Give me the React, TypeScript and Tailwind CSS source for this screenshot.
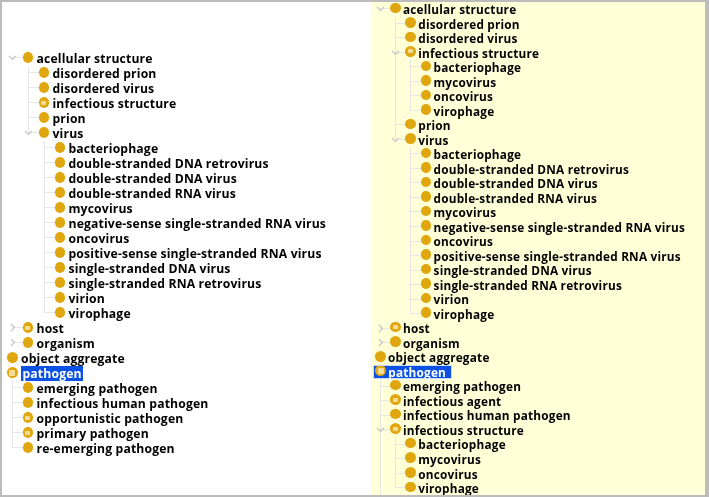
type Node = { t: string; d?: boolean; o?: boolean; c?: boolean; s?: boolean; more?: boolean; k?: Node[] };

const leaf = (t: string, d = false): Node => ({ t, d });

const virusKids = [
  "bacteriophage",
  "double-stranded DNA retrovirus",
  "double-stranded DNA virus",
  "double-stranded RNA virus",
  "mycovirus",
  "negative-sense single-stranded RNA virus",
  "oncovirus",
  "positive-sense single-stranded RNA virus",
  "single-stranded DNA virus",
  "single-stranded RNA retrovirus",
  "virion",
  "virophage",
].map((t) => leaf(t));

const phages = ["bacteriophage", "mycovirus", "oncovirus", "virophage"].map((t) => leaf(t));

const leftTree: Node[] = [
  {
    t: "acellular structure",
    o: true,
    k: [
      leaf("disordered prion"),
      leaf("disordered virus"),
      leaf("infectious structure", true),
      leaf("prion"),
      { t: "virus", o: true, k: virusKids },
    ],
  },
  { t: "host", d: true, c: true },
  { t: "organism", c: true },
];
const leftRoots: Node[] = [
  leaf("object aggregate"),
  {
    t: "pathogen",
    d: true,
    s: true,
    o: true,
    k: [
      leaf("emerging pathogen"),
      leaf("infectious human pathogen"),
      leaf("opportunistic pathogen", true),
      leaf("primary pathogen", true),
      leaf("re-emerging pathogen"),
    ],
  },
];

const rightTree: Node[] = [
  {
    t: "acellular structure",
    o: true,
    k: [
      leaf("disordered prion"),
      leaf("disordered virus"),
      { t: "infectious structure", d: true, o: true, k: phages },
      leaf("prion"),
      { t: "virus", o: true, k: virusKids },
    ],
  },
  { t: "host", d: true, c: true },
  { t: "organism", c: true },
];
const rightRoots: Node[] = [
  leaf("object aggregate"),
  {
    t: "pathogen",
    d: true,
    s: true,
    o: true,
    k: [
      leaf("emerging pathogen"),
      leaf("infectious agent", true),
      leaf("infectious human pathogen"),
      { t: "infectious structure", d: true, o: true, more: true, k: phages },
    ],
  },
];

type Guide = { level: number; half: boolean };
type Flat = { n: Node; depth: number; guides: Guide[] };

function flatten(nodes: Node[], depth: number, parents: number[], hide: boolean, out: Flat[]) {
  nodes.forEach((n, i) => {
    const last = i === nodes.length - 1;
    const guides: Guide[] = parents.map((level) => ({ level, half: false }));
    if (depth > 0 && !hide) guides.push({ level: depth - 1, half: last && !n.more });
    out.push({ n, depth, guides });
    if (n.k) {
      const next = depth > 0 && !hide && (!last || n.more) ? [...parents, depth - 1] : parents;
      flatten(n.k, depth + 1, next, false, out);
    }
  });
}

function build(tree: Node[], roots: Node[]) {
  const out: Flat[] = [];
  flatten(tree, 1, [], true, out);
  flatten(roots, 0, [], false, out);
  return out;
}

function Dot({ d, big, lift }: { d?: boolean; big?: boolean; lift: string }) {
  return (
    <span
      className={`flex shrink-0 items-center justify-center rounded-full bg-[#dfa60e] ${lift} ${
        big ? "h-[11px] w-[11px]" : "h-[10.5px] w-[10.5px]"
      }`}
    >
      {d && <span className={`rounded-[1px] bg-[#f3dd98] ${big ? "h-[6px] w-[6px]" : "h-[4px] w-[5px]"}`} />}
    </span>
  );
}

type Metrics = { dot0: number; step: number; h: number; lift: string; gap: string; right: boolean };

function Row({ f, m }: { f: Flat; m: Metrics }) {
  const { n, depth, guides } = f;
  const dotLeft = m.dot0 + depth * m.step;
  const lineX = (level: number) => m.dot0 + 5 + level * m.step;
  const px = lineX(depth - 1);
  const mid = m.h / 2 - 1;
  const fullSelect = n.s && m.right;
  const label = (
    <span
      className={`whitespace-nowrap ${m.gap} ${
        n.s ? (m.right ? "text-white" : "bg-[#0b52e4] px-[1.5px] text-white") : "text-black"
      }`}
    >
      {n.t}
    </span>
  );
  const dot = <Dot d={n.d} big={depth === 0} lift={m.lift} />;
  return (
    <div className="relative flex shrink-0 items-center" style={{ height: m.h, lineHeight: `${m.h}px`, paddingLeft: fullSelect ? 2 : dotLeft }}>
      {guides.map((g, i) => (
        <span
          key={i}
          className="absolute w-px bg-[#e6e6e6]"
          style={{ left: lineX(g.level), top: 0, height: g.half ? m.h / 2 : m.h }}
        />
      ))}
      {depth > 0 && <span className="absolute h-px bg-[#e6e6e6]" style={{ left: px, top: mid, width: m.step - 4 }} />}
      {(n.o || n.c) && (
        <svg width="9" height="9" viewBox="0 0 9 9" className="absolute" style={{ left: px - 4, top: mid - 4 }}>
          <path d={n.o ? "M1 3 L4.5 6.5 L8 3" : "M3 1 L6.5 4.5 L3 8"} fill="none" stroke="#c4c4c4" strokeWidth="1.1" />
        </svg>
      )}
      {fullSelect ? (
        <span className="relative flex h-full w-[79px] items-center bg-[#0b52e4] pl-[2px] outline outline-1 -outline-offset-1 outline-[#c8dcff]">
          {dot}
          {label}
        </span>
      ) : (
        <span className="relative flex h-full items-center">
          {dot}
          {label}
        </span>
      )}
    </div>
  );
}

function Tree({ rows, m }: { rows: Flat[]; m: Metrics }) {
  return (
    <div className="flex flex-col">
      {rows.map((f, i) => (
        <Row key={i} f={f} m={m} />
      ))}
    </div>
  );
}

const leftM: Metrics = { dot0: 4.5, step: 16, h: 15, lift: "-mt-[1px]", gap: "ml-[3.5px]", right: false };
const rightM: Metrics = { dot0: 3.8, step: 15.33, h: 14.52, lift: "-mt-[3px]", gap: "ml-[2.3px]", right: true };

export default function App() {
  return (
    <div className="h-[498px] w-[709px] bg-white font-['Open_Sans',sans-serif] font-bold blur-[0.3px]">
      <div className="flex h-[497px] w-[709px] overflow-hidden border-2 border-r-[4px] border-[#bcbcbc]">
        <div className="w-[369px] shrink-0 overflow-hidden bg-white pt-[48.5px] text-[12.2px] tracking-[0.15px]">
          <Tree rows={build(leftTree, leftRoots)} m={leftM} />
        </div>
        <div className="min-w-0 flex-1 overflow-hidden bg-[#ffffd8] text-[11.8px] tracking-[0.2px]">
          <Tree rows={build(rightTree, rightRoots)} m={rightM} />
        </div>
      </div>
    </div>
  );
}
